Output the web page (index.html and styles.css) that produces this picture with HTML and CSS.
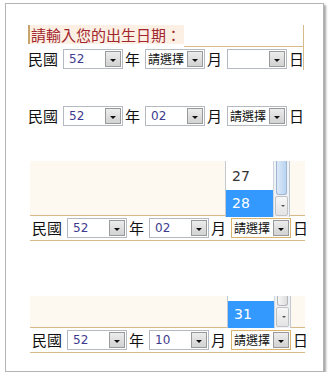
FILE: index.html
```html
<!DOCTYPE html>
<html lang="zh-Hant">
<head>
  <meta charset="UTF-8" />
  <meta name="viewport" content="width=device-width, initial-scale=1.0" />
  <title>出生日期</title>
  <link rel="stylesheet" href="styles.css">
</head>
<body>
  <div class="frame">

    <div class="head">
      <div class="title">請輸入您的出生日期：</div>
      <div class="head-line"></div>
    </div>
    <div class="row row-first">
      <span class="lbl lbl-wide">民國</span>
      <div class="sel"><span class="val num">52</span><span class="btn"></span></div>
      <span class="lbl">年</span>
      <div class="sel"><span class="val">請選擇</span><span class="btn"></span></div>
      <span class="lbl">月</span>
      <div class="sel"><span class="val"></span><span class="btn"></span></div>
      <span class="lbl">日</span>
    </div>

    <div class="row row-second">
      <span class="lbl lbl-wide">民國</span>
      <div class="sel"><span class="val num">52</span><span class="btn"></span></div>
      <span class="lbl">年</span>
      <div class="sel"><span class="val num">02</span><span class="btn"></span></div>
      <span class="lbl">月</span>
      <div class="sel"><span class="val">請選擇</span><span class="btn"></span></div>
      <span class="lbl">日</span>
    </div>

    <div class="panel panel-a">
      <div class="list list-a">
        <div class="items">
          <div class="item">27</div>
          <div class="item picked">28</div>
        </div>
        <div class="scroll">
          <div class="thumb thumb-blue"></div>
          <div class="arrow"></div>
        </div>
      </div>
    </div>
    <div class="row row-third">
      <span class="lbl lbl-wide">民國</span>
      <div class="sel"><span class="val num">52</span><span class="btn"></span></div>
      <span class="lbl">年</span>
      <div class="sel"><span class="val num">02</span><span class="btn"></span></div>
      <span class="lbl">月</span>
      <div class="sel focus"><span class="val">請選擇</span><span class="btn"></span></div>
      <span class="lbl">日</span>
    </div>

    <div class="panel panel-b">
      <div class="list list-b">
        <div class="items">
          <div class="item picked">31</div>
        </div>
        <div class="scroll">
          <div class="thumb thumb-gray"></div>
          <div class="arrow"></div>
        </div>
      </div>
    </div>
    <div class="row row-fourth">
      <span class="lbl lbl-wide">民國</span>
      <div class="sel"><span class="val num">52</span><span class="btn"></span></div>
      <span class="lbl">年</span>
      <div class="sel"><span class="val num">10</span><span class="btn"></span></div>
      <span class="lbl">月</span>
      <div class="sel focus"><span class="val">請選擇</span><span class="btn"></span></div>
      <span class="lbl">日</span>
    </div>

  </div>
</body>
</html>
```

FILE: styles.css
```css
body {
  margin: 0;
  background: #fff;
  font-family: "Noto Sans CJK TC", "Noto Sans CJK SC", sans-serif;
}

.frame {
  margin: 3px 0 0 5px;
  width: 319px;
  height: 369px;
  border: 1px solid #b4b4b4;
  box-shadow: 2px 2px 2px rgba(0, 0, 0, 0.35);
  background: #fff;
  padding: 21px 0 0 22px;
  box-sizing: border-box;
}

/* header */
.head {
  display: flex;
  height: 22px;
  width: 276px;
}
.title {
  flex: none;
  height: 19px;
  line-height: 19px;
  padding: 0 3px 0 1px;
  border-left: 2px solid #c9a46c;
  background: #fbf0e3;
  color: #a3262e;
  font-size: 15px;
  white-space: nowrap;
}
.head-line {
  flex: 1;
  border-bottom: 1px solid #d8b98a;
  border-right: 1px solid #d8b98a;
  box-sizing: border-box;
}

/* date rows */
.row {
  display: flex;
  align-items: center;
  height: 23px;
  width: 276px;
  box-sizing: border-box;
}
.row-first {
  border-right: 1px solid #d8b98a;
}
.row-second {
  margin-top: 34px;
}
.row-third,
.row-fourth {
  border-bottom: 1px solid #d8b98a;
  height: 25px;
  padding-left: 2px;
  width: 275px;
  margin-left: 2px;
}

.lbl {
  flex: none;
  white-space: nowrap;
  font-size: 15px;
  line-height: 18px;
  color: #111;
  width: 15px;
  margin-left: 2px;
}
.lbl-wide {
  width: 30px;
  margin-left: 0;
}

.sel {
  flex: none;
  display: flex;
  width: 60px;
  height: 20px;
  border: 1px solid #b5bac2;
  background: #fff;
  box-sizing: border-box;
}
.lbl + .sel {
  margin-left: 5px;
}
.sel.focus {
  border-color: #d9b46e;
}
.val {
  flex: 1;
  min-width: 0;
  overflow: hidden;
  white-space: nowrap;
  font-size: 12px;
  line-height: 18px;
  padding-left: 2px;
  color: #111;
}
.val.num {
  font-family: "DejaVu Sans", sans-serif;
  padding-left: 5px;
  color: #3d3a8e;
}
.btn {
  flex: none;
  position: relative;
  width: 16px;
  margin: 1px;
  border: 1px solid #9a9a9a;
  background: linear-gradient(#ececec, #d2d2d2);
  box-sizing: border-box;
}
.btn::after {
  content: "";
  position: absolute;
  left: 4px;
  top: 7px;
  border-left: 3px solid transparent;
  border-right: 3px solid transparent;
  border-top: 3px solid #111;
}

/* open drop-down panels */
.panel {
  position: relative;
  width: 275px;
  margin-left: 2px;
  background: #fdf8f0;
  border-bottom: 1px solid #d8b98a;
  box-sizing: border-box;
}
.panel-a {
  margin-top: 34px;
  height: 55px;
}
.panel-b {
  margin-top: 55px;
  height: 32px;
}

.list {
  position: absolute;
  display: flex;
  background: #fff;
  border-left: 1px solid #c4c8cf;
}
.list-a {
  left: 195px;
  top: 0;
  width: 64px;
  height: 56px;
}
.list-b {
  left: 197px;
  top: 0;
  width: 63px;
  height: 32px;
}
.items {
  flex: 1;
  display: flex;
  flex-direction: column;
  justify-content: flex-end;
}
.item {
  height: 27px;
  line-height: 27px;
  padding-left: 6px;
  font-family: "DejaVu Sans", sans-serif;
  font-size: 14px;
  color: #333;
}
.item.picked {
  background: #3399ff;
  color: #fff;
}

.scroll {
  width: 17px;
  display: flex;
  flex-direction: column;
  background: #eef1f5;
  border-left: 1px solid #d0d6de;
  border-right: 1px solid #c2c8d0;
  box-sizing: border-box;
}
.thumb {
  flex: 1;
  margin: 0 2px;
  border: 1px solid #9fb6d2;
  border-top: none;
  border-radius: 0 0 3px 3px;
}
.thumb-blue {
  background: linear-gradient(90deg, #dbe9f8, #b9d4f1);
}
.thumb-gray {
  background: linear-gradient(90deg, #f6f6f6, #dedede);
  border-color: #b5b5b5;
}
.arrow {
  position: relative;
  height: 18px;
  margin: 1px;
  border: 1px solid #c2c2c2;
  border-radius: 2px;
  background: linear-gradient(#f7f7f7, #e3e3e3);
}
.arrow::after {
  content: "";
  position: absolute;
  left: 5px;
  top: 8px;
  border-left: 2px solid transparent;
  border-right: 2px solid transparent;
  border-top: 2px solid #555;
}
```
